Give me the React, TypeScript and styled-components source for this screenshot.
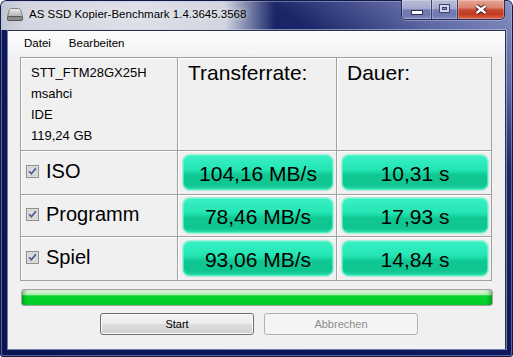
import { Fragment } from 'react'
import styled, { createGlobalStyle } from 'styled-components'

const GlobalStyle = createGlobalStyle`
  html, body {
    margin: 0;
    padding: 0;
    background: #ffffff;
  }
  body {
    width: 513px;
    height: 357px;
    overflow: hidden;
    font-family: "Liberation Sans", Arial, sans-serif;
  }
`

const Window = styled.div`
  width: 513px;
  height: 357px;
  box-sizing: border-box;
  display: flex;
  flex-direction: column;
  border-radius: 6px 6px 3px 3px;
  background:
    linear-gradient(90deg, #bfc4d2 0px, #d3d6e0 24px, #dde0e8 140px, #d2d5df 225px, rgba(190, 196, 214, 0.6) 248px, rgba(20, 30, 100, 0) 275px) top left / 100% 30px no-repeat,
    linear-gradient(to top right, #0a1455 0%, #0e1a5e 55%, #1a2668 76%, #5d67a2 88%, #8a92c3 100%);
  box-shadow: inset 0 0 0 1px #141a44, inset 0 0 0 2px rgba(180, 190, 230, 0.45);
`

const TitleBar = styled.div`
  height: 30px;
  flex: none;
  display: flex;
  align-items: flex-start;
  padding-left: 7px;
`

const AppIcon = styled.svg`
  margin-top: 8px;
  flex: none;
`

const TitleText = styled.div`
  margin: 6px 0 0 6px;
  font-size: 11.5px;
  line-height: 16px;
  color: #000;
  white-space: nowrap;
  text-shadow: 0 0 6px rgba(255, 255, 255, 0.9);
`

const CaptionGroup = styled.div`
  margin-left: auto;
  margin-right: 8px;
  height: 20px;
  display: flex;
  box-sizing: border-box;
  border: 1px solid #262c55;
  border-top: none;
  border-radius: 0 0 5px 5px;
  overflow: hidden;
  box-shadow: 0 1px 0 rgba(220, 225, 245, 0.35);
`

const CaptionButton = styled.div<{ $w: number; $close?: boolean }>`
  width: ${p => p.$w}px;
  box-sizing: border-box;
  display: flex;
  align-items: center;
  justify-content: center;
  border-left: ${p => (p.$close ? '1px solid #3a2030' : 'none')};
  box-shadow: inset 0 0 0 1px rgba(255, 255, 255, 0.25);
  background: ${p =>
    p.$close
      ? 'linear-gradient(#e7a596 0%, #d98470 40%, #c84a33 52%, #c3391f 75%, #d86a4c 100%)'
      : 'linear-gradient(#b9bed8 0%, #a3a9cb 45%, #757db0 52%, #6f78ad 80%, #848cc0 100%)'};
  & + & {
    border-left: 1px solid #3a4170;
  }
`

const Body = styled.div`
  flex: 1;
  display: flex;
  padding: 0 8px 8px;
`

const Client = styled.div`
  flex: 1;
  display: flex;
  flex-direction: column;
  background: #f0f0f0;
  border-top: 1px solid #2a2f4a;
  border-right: 1px solid #2a2f4a;
  box-shadow: 0 0 0 1px rgba(200, 210, 240, 0.55);
`

const MenuBar = styled.div`
  height: 23px;
  display: flex;
  align-items: center;
  gap: 18px;
  padding-left: 16px;
  background: linear-gradient(#fcfcfd, #f3f4f6);
  font-size: 11.5px;
  color: #000;
`

const Content = styled.div`
  padding: 3px 12px 0;
  display: flex;
  flex-direction: column;
`

const Table = styled.div`
  display: grid;
  grid-template-columns: 156px 158px 154px;
  grid-template-rows: 92px 43px 41px 43px;
  gap: 1px;
  width: max-content;
  background: #a0a0a0;
  border: 1px solid #a0a0a0;
`

const Cell = styled.div`
  background: #f0f0f0;
  box-shadow: inset 1px 1px 0 #ffffff;
  display: flex;
  align-items: center;
`

const InfoCell = styled(Cell)`
  flex-direction: column;
  align-items: flex-start;
  padding: 4px 10px;
  font-size: 13px;
  line-height: 21px;
  color: #000;
`

const HeadCell = styled(Cell)`
  align-items: flex-start;
  padding: 3px 10px;
  font-size: 21px;
  line-height: 24px;
  color: #000;
`

const LabelCell = styled(Cell)`
  padding: 0 0 2px 5px;
  gap: 7px;
  font-size: 20px;
  line-height: 23px;
  color: #000;
`

const ValueCell = styled(Cell)`
  padding: 0 3px 0 5px;
`

const ValueBox = styled.div`
  flex: 1;
  height: 35px;
  box-sizing: border-box;
  padding-top: 2px;
  border-radius: 7px;
  display: flex;
  align-items: center;
  justify-content: center;
  font-size: 21px;
  color: #000;
  background: linear-gradient(#3af0c4 0%, #25e6b5 40%, #19d8a4 50%, #10c893 56%, #0fc590 86%, #2fe0b0 100%);
  box-shadow: inset 0 0 0 1px rgba(120, 255, 215, 0.55), 0 0 0 1px rgba(40, 230, 175, 0.35);
`

const Progress = styled.div`
  margin: 8px 0 0 1px;
  width: 472px;
  height: 17px;
  box-sizing: border-box;
  border: 1px solid #a2a2a2;
  border-radius: 3px;
  background: linear-gradient(#e2f7e2 0%, #bdefbd 25%, #9ae59c 34%, #06d52d 38%, #00cf27 80%, #0cd434 100%);
  box-shadow: inset 5px 0 4px -3px rgba(0, 90, 10, 0.45), inset -5px 0 4px -3px rgba(0, 90, 10, 0.45);
`

const ButtonRow = styled.div`
  margin-top: 7px;
  display: flex;
  gap: 10px;
  padding-left: 80px;
`

const Button = styled.button<{ $disabled?: boolean }>`
  width: 154px;
  height: 22px;
  box-sizing: border-box;
  padding: 0;
  border-radius: 3px;
  font-family: "Liberation Sans", Arial, sans-serif;
  font-size: 11px;
  border: 1px solid ${p => (p.$disabled ? '#adb2b5' : '#707070')};
  color: ${p => (p.$disabled ? '#8d8d8d' : '#000')};
  background: ${p =>
    p.$disabled ? '#f4f4f4' : 'linear-gradient(#f3f3f3 0%, #ebebeb 48%, #dddddd 52%, #cfcfcf 100%)'};
  box-shadow: ${p => (p.$disabled ? 'none' : 'inset 0 0 0 1px #fbfbfb')};
`

function CheckBox() {
  return (
    <svg width="13" height="13" viewBox="0 0 13 13">
      <rect x="0.5" y="0.5" width="12" height="12" fill="#f2f2f2" stroke="#8f8f8f" />
      <rect x="2" y="2" width="9" height="9" fill="#dedede" stroke="#c9c9c9" strokeWidth="1" />
      <path d="M3.2 6.3 L5.4 8.8 L9.8 3.4" stroke="#4a5a92" strokeWidth="1.7" fill="none" />
    </svg>
  )
}

const rows = [
  { name: 'ISO', rate: '104,16 MB/s', time: '10,31 s' },
  { name: 'Programm', rate: '78,46 MB/s', time: '17,93 s' },
  { name: 'Spiel', rate: '93,06 MB/s', time: '14,84 s' },
]

export default function App() {
  return (
    <>
      <GlobalStyle />
      <Window>
        <TitleBar>
          <AppIcon width="16" height="13" viewBox="0 0 16 13">
            <defs>
              <linearGradient id="drv" x1="0" y1="0" x2="0" y2="1">
                <stop offset="0" stopColor="#f0f0f0" />
                <stop offset="1" stopColor="#b0b0b0" />
              </linearGradient>
            </defs>
            <path d="M2.5 1.5 Q3 0.5 4.5 0.5 H11.5 Q13 0.5 13.5 1.5 L15.5 8.5 H0.5 Z" fill="url(#drv)" stroke="#808080" />
            <rect x="0.5" y="8.5" width="15" height="4" rx="1" fill="#8a8a8a" stroke="#555" />
          </AppIcon>
          <TitleText>AS SSD Kopier-Benchmark 1.4.3645.3568</TitleText>
          <CaptionGroup>
            <CaptionButton $w={29}>
              <svg width="12" height="5" viewBox="0 0 12 5" style={{ marginTop: 6 }}>
                <rect x="0.5" y="0.5" width="11" height="4" fill="#fff" stroke="#2a2f58" />
              </svg>
            </CaptionButton>
            <CaptionButton $w={26}>
              <svg width="11" height="9" viewBox="0 0 11 9" style={{ marginTop: -2 }}>
                <rect x="0.5" y="0.5" width="10" height="8" fill="none" stroke="#3a4070" />
                <rect x="2" y="2" width="7" height="5" fill="none" stroke="#d3d6e6" strokeWidth="2" />
                <rect x="3.5" y="3.5" width="4" height="2" fill="#8c93bf" stroke="#3a4070" />
              </svg>
            </CaptionButton>
            <CaptionButton $w={47} $close>
              <svg width="14" height="11" viewBox="0 0 14 11" style={{ marginTop: -1 }}>
                <path d="M2.5 2 L11.5 9 M11.5 2 L2.5 9" stroke="#4a1a14" strokeWidth="4.4" />
                <path d="M2.5 2 L11.5 9 M11.5 2 L2.5 9" stroke="#ffffff" strokeWidth="2.4" />
              </svg>
            </CaptionButton>
          </CaptionGroup>
        </TitleBar>
        <Body>
          <Client>
            <MenuBar>
              <span>Datei</span>
              <span>Bearbeiten</span>
            </MenuBar>
            <Content>
              <Table>
                <InfoCell>
                  <span>STT_FTM28GX25H</span>
                  <span>msahci</span>
                  <span>IDE</span>
                  <span>119,24 GB</span>
                </InfoCell>
                <HeadCell>Transferrate:</HeadCell>
                <HeadCell>Dauer:</HeadCell>
                {rows.map(r => (
                  <Fragment key={r.name}>
                    <LabelCell>
                      <CheckBox />
                      <span>{r.name}</span>
                    </LabelCell>
                    <ValueCell>
                      <ValueBox>{r.rate}</ValueBox>
                    </ValueCell>
                    <ValueCell>
                      <ValueBox>{r.time}</ValueBox>
                    </ValueCell>
                  </Fragment>
                ))}
              </Table>
              <Progress />
              <ButtonRow>
                <Button>Start</Button>
                <Button $disabled>Abbrechen</Button>
              </ButtonRow>
            </Content>
          </Client>
        </Body>
      </Window>
    </>
  )
}
